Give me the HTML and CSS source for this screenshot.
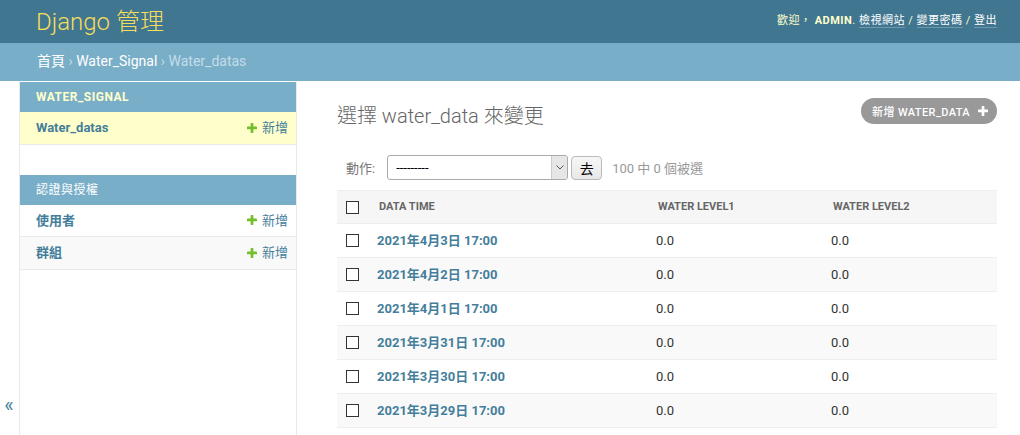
FILE: index.html
```html
<!DOCTYPE html>
<html lang="zh-Hant">
<head>
<meta charset="utf-8">
<title>選擇 water_data 來變更 | Django 管理</title>
<link rel="stylesheet" href="styles.css">
</head>
<body>
<header class="header">
  <div class="branding">Django 管理</div>
  <div class="user-tools">歡迎， <strong>admin</strong>. <a class="ut-link" href="#">檢視網站</a> / <a class="ut-link" href="#">變更密碼</a> / <a class="ut-link" href="#">登出</a></div>
</header>
<div class="breadcrumbs"><a href="#">首頁</a> › <a href="#">Water_Signal</a> › Water_datas</div>
<div class="main">
  <div class="toggle"><span class="toggle-glyph">«</span></div>
  <nav class="sidebar">
    <table class="module current-app">
      <caption><a class="section cur" href="#">Water_Signal</a></caption>
      <tr class="current-model">
        <th><a class="model" href="#">Water_datas</a></th>
        <td><a class="addlink" href="#"><svg class="plus" viewBox="192 192 1408 1408"><path fill="#70bf2b" d="M1600 796v192q0 40-28 68t-68 28h-416v416q0 40-28 68t-68 28h-192q-40 0-68-28t-28-68v-416h-416q-40 0-68-28t-28-68v-192q0-40 28-68t68-28h416v-416q0-40 28-68t68-28h192q40 0 68 28t28 68v416h416q40 0 68 28t28 68z"/></svg>新增</a></td>
      </tr>
    </table>
    <table class="module">
      <caption><a class="section" href="#">認證與授權</a></caption>
      <tr>
        <th><a class="model" href="#">使用者</a></th>
        <td><a class="addlink" href="#"><svg class="plus" viewBox="192 192 1408 1408"><path fill="#70bf2b" d="M1600 796v192q0 40-28 68t-68 28h-416v416q0 40-28 68t-68 28h-192q-40 0-68-28t-28-68v-416h-416q-40 0-68-28t-28-68v-192q0-40 28-68t68-28h416v-416q0-40 28-68t68-28h192q40 0 68 28t28 68v416h416q40 0 68 28t28 68z"/></svg>新增</a></td>
      </tr>
      <tr class="even">
        <th><a class="model" href="#">群組</a></th>
        <td><a class="addlink" href="#"><svg class="plus" viewBox="192 192 1408 1408"><path fill="#70bf2b" d="M1600 796v192q0 40-28 68t-68 28h-416v416q0 40-28 68t-68 28h-192q-40 0-68-28t-28-68v-416h-416q-40 0-68-28t-28-68v-192q0-40 28-68t68-28h416v-416q0-40 28-68t68-28h192q40 0 68 28t28 68v416h416q40 0 68 28t28 68z"/></svg>新增</a></td>
      </tr>
    </table>
  </nav>
  <div class="content">
    <div class="content-head">
      <h1 class="title">選擇 water_data 來變更</h1>
      <a class="object-tool" href="#">新增 water_data<svg class="tool-plus" viewBox="192 192 1408 1408"><path fill="#fff" d="M1600 796v192q0 40-28 68t-68 28h-416v416q0 40-28 68t-68 28h-192q-40 0-68-28t-28-68v-416h-416q-40 0-68-28t-28-68v-192q0-40 28-68t68-28h416v-416q0-40 28-68t68-28h192q40 0 68 28t28 68v416h416q40 0 68 28t28 68z"/></svg></a>
    </div>
    <div class="actions">
      <span class="action-label">動作:</span>
      <div class="select"><span class="select-text">---------</span><span class="select-arrow"><svg viewBox="0 0 8 5" class="chev"><path d="M0.5 0.5L4 4L7.5 0.5" fill="none" stroke="#555" stroke-width="1"/></svg></span></div>
      <button class="go" type="button">去</button>
      <span class="counter">100 中 0 個被選</span>
    </div>
    <table class="results">
      <colgroup><col class="c-check"><col class="c-time"><col class="c-l1"><col class="c-l2"></colgroup>
      <thead>
        <tr>
          <th class="check-col"><input class="cb" type="checkbox"></th>
          <th><span class="th-text">Data time</span></th>
          <th><span class="th-text">Water level1</span></th>
          <th><span class="th-text">Water level2</span></th>
        </tr>
      </thead>
      <tbody>
        <tr><td class="check-col"><input class="cb" type="checkbox"></td><td><a class="rowlink" href="#">2021年4月3日 17:00</a></td><td>0.0</td><td>0.0</td></tr>
        <tr class="even"><td class="check-col"><input class="cb" type="checkbox"></td><td><a class="rowlink" href="#">2021年4月2日 17:00</a></td><td>0.0</td><td>0.0</td></tr>
        <tr><td class="check-col"><input class="cb" type="checkbox"></td><td><a class="rowlink" href="#">2021年4月1日 17:00</a></td><td>0.0</td><td>0.0</td></tr>
        <tr class="even"><td class="check-col"><input class="cb" type="checkbox"></td><td><a class="rowlink" href="#">2021年3月31日 17:00</a></td><td>0.0</td><td>0.0</td></tr>
        <tr><td class="check-col"><input class="cb" type="checkbox"></td><td><a class="rowlink" href="#">2021年3月30日 17:00</a></td><td>0.0</td><td>0.0</td></tr>
        <tr class="even"><td class="check-col"><input class="cb" type="checkbox"></td><td><a class="rowlink" href="#">2021年3月29日 17:00</a></td><td>0.0</td><td>0.0</td></tr>
      </tbody>
    </table>
  </div>
</div>
</body>
</html>
```
FILE: styles.css
```css
* { box-sizing: border-box; }
html, body { margin: 0; padding: 0; }
body {
  font-family: Roboto, "Noto Sans CJK TC", sans-serif;
  font-size: 14px;
  color: #333;
  background: #fff;
  overflow: hidden;
}
a { text-decoration: none; }

.header {
  height: 43px;
  background: #417690;
  display: flex;
  align-items: center;
  justify-content: space-between;
  padding: 0 23px 0 36px;
}
.branding {
  font-size: 24px;
  font-weight: 300;
  line-height: 24px;
  color: #f5dd5d;
}
.user-tools {
  font-size: 11px;
  letter-spacing: 0.5px;
  text-transform: uppercase;
  color: #ffc;
  line-height: 14px;
  margin-top: -2px;
}
.user-tools strong { font-weight: bold; }
.ut-link {
  color: #fff;
  border-bottom: 1px solid rgba(255,255,255,0.25);
}

.breadcrumbs {
  height: 38px;
  background: #79aec8;
  color: #c4dce8;
  font-size: 14px;
  line-height: 17px;
  padding: 10px 37px;
}
.breadcrumbs a { color: #fff; }

.main {
  display: flex;
  min-height: calc(100vh - 81px);
}
.toggle {
  flex: 0 0 20px;
  border-right: 1px solid #eaeaea;
  padding-top: 312px;
  text-align: center;
}
.toggle-glyph {
  display: block;
  color: #447e9b;
  font-size: 20px;
  line-height: 24px;
  padding-right: 1px;
}
.sidebar {
  flex: 0 0 277px;
  border-right: 1px solid #eaeaea;
  border-top: 1px solid transparent;
}
.module {
  width: 100%;
  border-collapse: separate;
  border-spacing: 0;
  margin-bottom: 30px;
}
.module caption {
  background: #79aec8;
  text-align: left;
  padding: 8px 8px 8px 16px;
  font-size: 12px;
  line-height: 14px;
  letter-spacing: 0.5px;
  text-transform: uppercase;
}
.section { color: #fff; }
.section.cur { color: #ffc; font-weight: bold; }
.module th, .module td {
  border-bottom: 1px solid #eaeaea;
  padding: 8px;
  line-height: 15px;
  font-size: 13px;
  vertical-align: middle;
}
.module th { text-align: left; padding-left: 16px; width: 100%; }
.module td { white-space: nowrap; text-align: right; }
.module tr.even { background: #f9f9f9; }
.module tr.current-model { background: #ffc; }
.model { color: #447e9b; font-weight: bold; }
.addlink {
  color: #447e9b;
  font-size: 13px;
  display: inline-flex;
  align-items: center;
}
.plus { width: 10px; height: 10px; margin-right: 5px; }

.content {
  flex: 1;
  padding: 17px 23px 0 40px;
}
.content-head {
  display: flex;
  justify-content: space-between;
  align-items: flex-start;
  margin-bottom: 17px;
}
.title {
  margin: 6px 0 0;
  font-size: 20px;
  font-weight: 300;
  line-height: 24px;
  color: #666;
}
.object-tool {
  display: inline-flex;
  align-items: center;
  height: 26px;
  padding: 0 9px 0 11px;
  border-radius: 15px;
  background: #999;
  color: #fff;
  font-size: 11px;
  font-weight: 500;
  letter-spacing: 0.4px;
  text-transform: uppercase;
}
.tool-plus { width: 10px; height: 10px; margin-left: 8px; }

.actions {
  display: flex;
  align-items: center;
  padding: 10px 10px 10px 9px;
  height: 45px;
  font-size: 13px;
}
.action-label { color: #777; margin-right: 12px; }
.select {
  width: 181px;
  height: 25px;
  border: 1px solid #aaa;
  border-radius: 3px;
  display: flex;
  align-items: center;
  justify-content: space-between;
  padding: 0 0 0 8px;
  background: #fff;
}
.select-text { font-size: 13px; color: #000; }
.select-arrow {
  width: 16px;
  height: 23px;
  border-left: 1px solid #ccc;
  background: #e6e6e6;
  display: flex;
  align-items: center;
  justify-content: center;
  border-radius: 0 2px 2px 0;
}
.chev { width: 8px; height: 5px; }
.go {
  margin-left: 3px;
  width: 31px;
  height: 24px;
  border: 1px solid #bbb;
  border-radius: 4px;
  background: linear-gradient(#f6f6f6, #e8e8e8);
  font-family: Roboto, "Noto Sans CJK TC", sans-serif;
  font-size: 14px;
  color: #000;
  padding: 0;
}
.counter { color: #999; margin-left: 10px; }

.results {
  width: 100%;
  border-collapse: separate;
  border-spacing: 0;
  table-layout: fixed;
}
.c-check { width: 32px; }
.c-time { width: 279px; }
.c-l1 { width: 175px; }
.c-l2 { width: 174px; }
.results thead th {
  background: #f6f6f6;
  border-top: 1px solid #eee;
  border-bottom: 1px solid #eee;
  padding: 0;
  text-align: left;
  color: #666;
  font-size: 11px;
  font-weight: bold;
  text-transform: uppercase;
  vertical-align: middle;
}
.th-text { display: block; padding: 9px 10px; line-height: 14px; }
.results td {
  border-bottom: 1px solid #eee;
  padding: 9px 8px;
  font-size: 13px;
  line-height: 15px;
  vertical-align: middle;
  color: #333;
}
.results tr.even td { background: #f9f9f9; }
.results .check-col { padding-left: 9px; padding-right: 0; }
.cb {
  appearance: none;
  -webkit-appearance: none;
  width: 13px;
  height: 13px;
  margin: 0;
  border: 1px solid #333;
  background: #fff;
  display: block;
}
.rowlink { color: #447e9b; font-weight: bold; }
```
